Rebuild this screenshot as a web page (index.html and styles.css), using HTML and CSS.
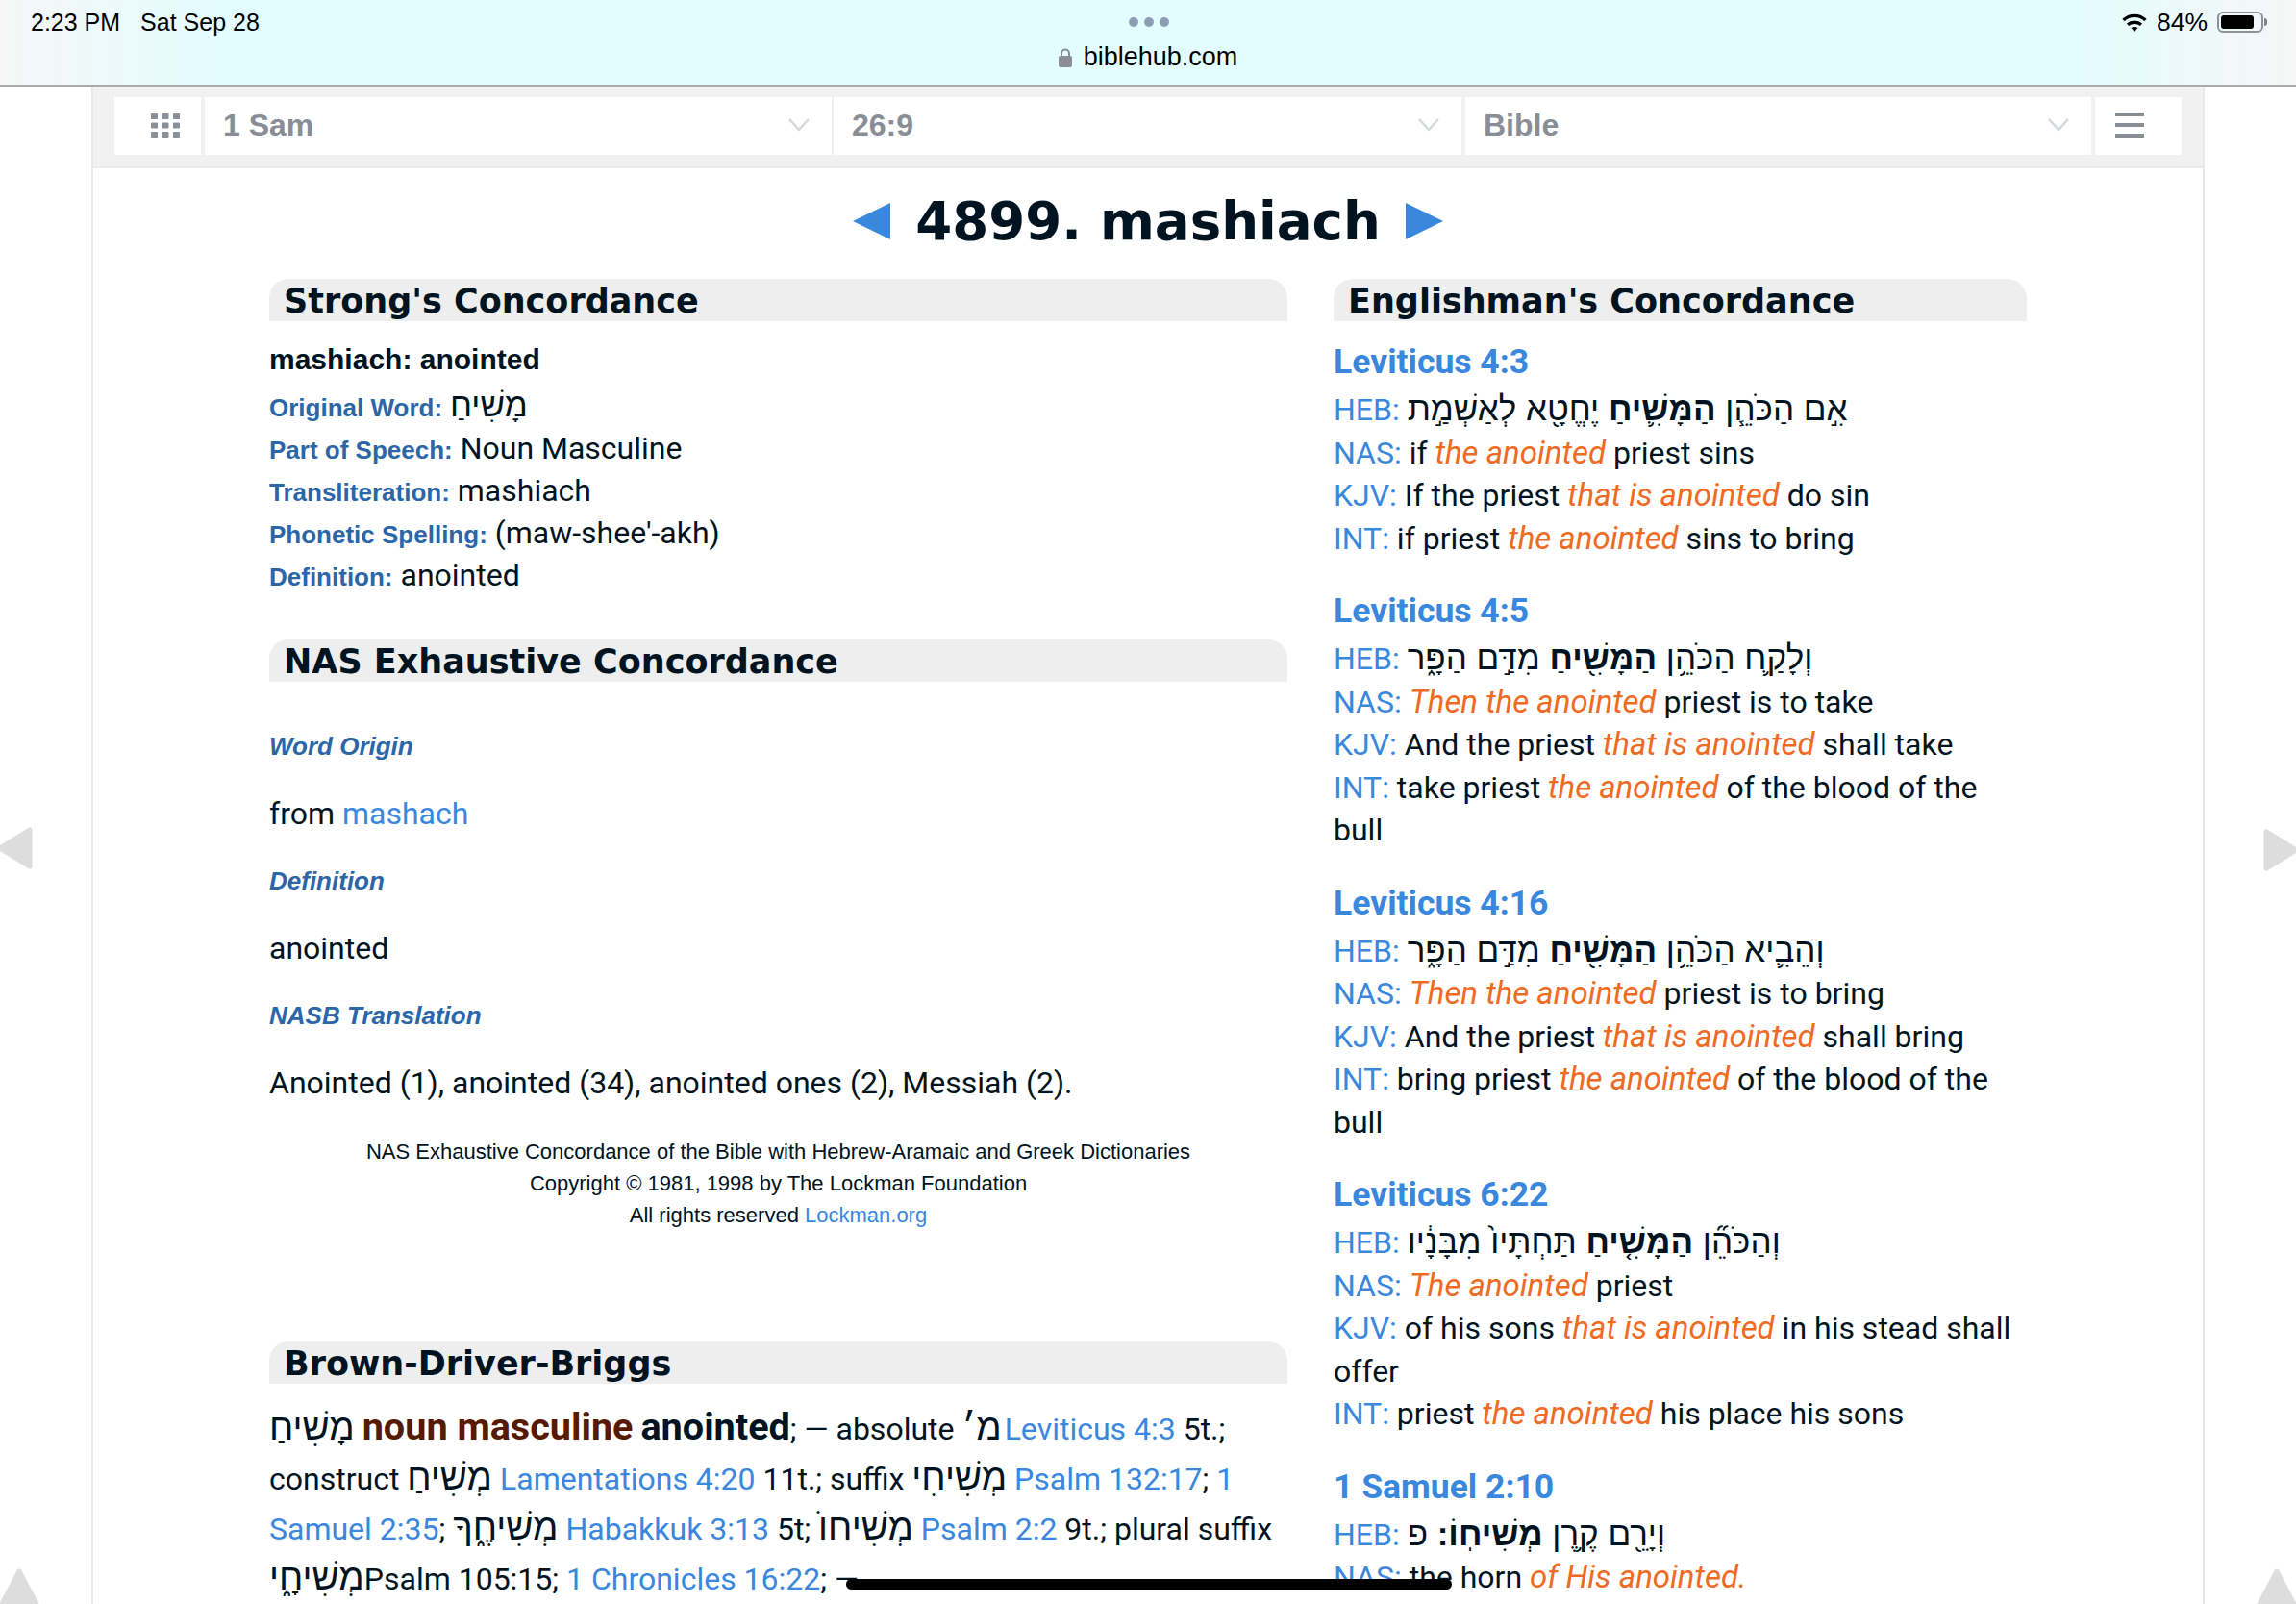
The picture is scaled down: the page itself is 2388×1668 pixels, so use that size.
FILE: index.html
```html
<!doctype html>
<html lang="en">
  <head>
    <title>4899. mashiach</title>
    <meta charset="utf-8"/>
    <link rel="stylesheet" href="styles.css">
  </head>
  <body>
    <!-- ipad status bar and address -->
    <div class="status">
      <div class="status-row">
        <div class="clock"><span>2:23 PM</span><span>Sat Sep 28</span></div>
        <div class="dots"><i></i><i></i><i></i></div>
        <div class="power">
          <svg class="wifi" width="26" height="19" viewBox="0 0 26 19"><path d="M1.500 7C8 .8 18 .8 24.500 7" fill="none" stroke="#000" stroke-width="3.400"/><path d="M6 11.800C10 8.300 16 8.300 20 11.800" fill="none" stroke="#000" stroke-width="3.400"/><path d="M9.500 15C11.500 13.600 14.500 13.600 16.500 15L13 19z" fill="#000"/></svg>
          <span class="percent">84%</span>
          <span class="battery"><b></b></span><span class="battery-tip"></span>
        </div>
      </div>
      <div class="address">
        <svg width="14" height="20" viewBox="0 0 14 20"><path d="M3 9V5.500a4 4 0 0 1 8 0V9" fill="none" stroke="#8a8d94" stroke-width="2"/><rect x="0" y="8" width="14" height="12" rx="2" fill="#8a8d94"/></svg>
        <span>biblehub.com</span>
      </div>
    </div>

    <div class="page">
      <!-- top nav -->
      <div class="nav">
        <div class="nav-box nav-icon nav-grid">
          <svg width="30" height="25" viewBox="0 0 30 25" fill="#8a8f99"><rect x="0" y="0" width="7" height="6" rx="1"/><rect x="11.500" y="0" width="7" height="6" rx="1"/><rect x="23" y="0" width="7" height="6" rx="1"/><rect x="0" y="9.500" width="7" height="6" rx="1"/><rect x="11.500" y="9.500" width="7" height="6" rx="1"/><rect x="23" y="9.500" width="7" height="6" rx="1"/><rect x="0" y="19" width="7" height="6" rx="1"/><rect x="11.500" y="19" width="7" height="6" rx="1"/><rect x="23" y="19" width="7" height="6" rx="1"/></svg>
        </div>
        <div class="nav-box nav-book"><span>1 Sam</span><svg class="chev" width="22" height="14" viewBox="0 0 22 14"><path d="M1 1l10 11L21 1" fill="none" stroke="#d5d8dc" stroke-width="2.500"/></svg></div>
        <div class="nav-box nav-verse"><span>26:9</span><svg class="chev" width="22" height="14" viewBox="0 0 22 14"><path d="M1 1l10 11L21 1" fill="none" stroke="#d5d8dc" stroke-width="2.500"/></svg></div>
        <div class="nav-box nav-bible"><span>Bible</span><svg class="chev" width="22" height="14" viewBox="0 0 22 14"><path d="M1 1l10 11L21 1" fill="none" stroke="#d5d8dc" stroke-width="2.500"/></svg></div>
        <div class="nav-box nav-icon nav-menu"><i></i><i></i><i></i></div>
      </div>

      <div class="main">
        <h1 class="title">
          <span class="tri tri-left"></span>
          <span>4899. mashiach</span>
          <span class="tri tri-right"></span>
        </h1>

        <div class="columns">
          <div class="col-left">
            <h2 class="sec-head">Strong's Concordance</h2>
            <div class="strongs">
              <p class="strongs-top">mashiach: anointed</p>
              <p><span class="lbl">Original Word:</span> <span class="heb" dir="rtl">מָשִׁיחַ</span></p>
              <p><span class="lbl">Part of Speech:</span> Noun Masculine</p>
              <p><span class="lbl">Transliteration:</span> mashiach</p>
              <p><span class="lbl">Phonetic Spelling:</span> (maw-shee'-akh)</p>
              <p><span class="lbl">Definition:</span> anointed</p>
            </div>

            <h2 class="sec-head">NAS Exhaustive Concordance</h2>
            <div class="nas">
              <p class="nas-lbl">Word Origin</p>
              <p>from <a href="#">mashach</a></p>
              <p class="nas-lbl">Definition</p>
              <p>anointed</p>
              <p class="nas-lbl">NASB Translation</p>
              <p>Anointed (1), anointed (34), anointed ones (2), Messiah (2).</p>
            </div>
            <div class="copy">
              NAS Exhaustive Concordance of the Bible with Hebrew-Aramaic and Greek Dictionaries<br>
              Copyright © 1981, 1998 by The Lockman Foundation<br>
              All rights reserved <a href="#">Lockman.org</a>
            </div>

            <h2 class="sec-head">Brown-Driver-Briggs</h2>
            <div class="bdb">
              <span class="heb">מָשִׁיחַ</span> <b class="brown">noun masculine</b> <b class="big">anointed</b>; — absolute <span class="heb abbr">מ׳</span> <a href="#">Leviticus 4:3</a> 5t.;
              construct <span class="heb">מְשִׁיחַ</span> <a href="#">Lamentations 4:20</a> 11t.; suffix <span class="heb">מְשִׁיחִי</span> <a href="#">Psalm 132:17</a>; <a href="#">1 Samuel 2:35</a>; <span class="heb">מְשִׁיחֶ֑ךָ</span> <a href="#">Habakkuk 3:13</a> 5t; <span class="heb">מְשִׁיחוֺ</span> <a href="#">Psalm 2:2</a> 9t.; plural suffix
              <span class="heb">מְשִׁיחָ֑י</span>Psalm 105:15; <a href="#">1 Chronicles 16:22</a>; —
            </div>
          </div>

          <div class="col-right">
            <h2 class="sec-head">Englishman's Concordance</h2>

            <div class="verse">
              <a class="ref" href="#">Leviticus 4:3</a>
              <p><span class="tag">HEB:</span> <span class="heb" dir="rtl">אִ֣ם הַכֹּהֵ֧ן <b>הַמָּשִׁ֛יחַ</b> יֶחֱטָ֖א לְאַשְׁמַ֣ת</span></p>
              <p><span class="tag">NAS:</span> if <em>the anointed</em> priest sins</p>
              <p><span class="tag">KJV:</span> If the priest <em>that is anointed</em> do sin</p>
              <p><span class="tag">INT:</span> if priest <em>the anointed</em> sins to bring</p>
            </div>

            <div class="verse">
              <a class="ref" href="#">Leviticus 4:5</a>
              <p><span class="tag">HEB:</span> <span class="heb" dir="rtl">וְלָקַ֛ח הַכֹּהֵ֥ן <b>הַמָּשִׁ֖יחַ</b> מִדַּ֣ם הַפָּ֑ר</span></p>
              <p><span class="tag">NAS:</span> <em>Then the anointed</em> priest is to take</p>
              <p><span class="tag">KJV:</span> And the priest <em>that is anointed</em> shall take</p>
              <p><span class="tag">INT:</span> take priest <em>the anointed</em> of the blood of the bull</p>
            </div>

            <div class="verse">
              <a class="ref" href="#">Leviticus 4:16</a>
              <p><span class="tag">HEB:</span> <span class="heb" dir="rtl">וְהֵבִ֛יא הַכֹּהֵ֥ן <b>הַמָּשִׁ֖יחַ</b> מִדַּ֣ם הַפָּ֑ר</span></p>
              <p><span class="tag">NAS:</span> <em>Then the anointed</em> priest is to bring</p>
              <p><span class="tag">KJV:</span> And the priest <em>that is anointed</em> shall bring</p>
              <p><span class="tag">INT:</span> bring priest <em>the anointed</em> of the blood of the bull</p>
            </div>

            <div class="verse">
              <a class="ref" href="#">Leviticus 6:22</a>
              <p><span class="tag">HEB:</span> <span class="heb" dir="rtl">וְהַכֹּהֵ֞ן <b>הַמָּשִׁ֤יחַ</b> תַּחְתָּיו֙ מִבָּנָ֔יו</span></p>
              <p><span class="tag">NAS:</span> <em>The anointed</em> priest</p>
              <p><span class="tag">KJV:</span> of his sons <em>that is anointed</em> in his stead shall offer</p>
              <p><span class="tag">INT:</span> priest <em>the anointed</em> his place his sons</p>
            </div>

            <div class="verse">
              <a class="ref" href="#">1 Samuel 2:10</a>
              <p><span class="tag">HEB:</span> <span class="heb" dir="rtl">וְיָרֵ֖ם קֶ֥רֶן <b>מְשִׁיחֽוֹ:</b> פ</span></p>
              <p><span class="tag">NAS:</span> the horn <em>of His anointed.</em></p>
            </div>
          </div>
        </div>
      </div>
    </div>

    <!-- page arrows that float over the sides -->
    <svg class="side side-left" width="40" height="48" viewBox="0 0 40 48"><path d="M3 24L34 5V43z"/></svg>
    <svg class="side side-right" width="40" height="48" viewBox="0 0 40 48"><path d="M37 24L6 5V43z"/></svg>
    <svg class="side side-up-left" width="44" height="40" viewBox="0 0 44 40"><path d="M22 4L40 38H4z"/></svg>
    <svg class="side side-up-right" width="44" height="40" viewBox="0 0 44 40"><path d="M22 4L40 38H4z"/></svg>
    <div class="home-bar"></div>
  </body>
</html>
```

FILE: styles.css
```css
/* page */
html, body{
  margin: 0;
  height: 1668px;
  overflow: hidden;
}
body{
  position: relative;
  background-color: #fff;
  color: #001320;
  font-family: Roboto, "Liberation Sans", sans-serif;
  font-size: 32px;
}
a{
  color: #3a87de;
  text-decoration: none;
}
p{
  margin: 0;
}

/* status bar */
.status{
  height: 90px;
  box-sizing: border-box;
  border-bottom: 2px solid #a9acae;
  background: linear-gradient(90deg, #f6f6f6 0, #e3fdff 10%, #e3fdff 90%, #f6f6f6 100%);
  font-family: "Liberation Sans", sans-serif;
  color: #000;
}
.status-row{
  height: 46px;
  padding: 0 30px 0 32px;
  display: grid;
  grid-template-columns: 1fr auto 1fr;
  align-items: center;
  font-size: 25px;
}
.clock{
  display: flex;
  gap: 21px;
}
.dots{
  display: flex;
  gap: 6px;
}
.dots i{
  width: 10px;
  height: 10px;
  border-radius: 50%;
  background-color: #8b9eb5;
}
.power{
  display: flex;
  align-items: center;
  justify-content: flex-end;
  gap: 10px;
}
.percent{
  font-size: 26.500px;
}
.battery{
  width: 48px;
  height: 22px;
  box-sizing: border-box;
  border: 2px solid #8d9396;
  border-radius: 6px;
  padding: 2px;
  display: flex;
}
.battery b{
  width: 34px;
  background-color: #000;
  border-radius: 3px;
}
.battery-tip{
  width: 3px;
  height: 8px;
  margin-left: -9px;
  background-color: #7d8386;
  border-radius: 0 3px 3px 0;
}
.address{
  margin-top: -2px;
  display: flex;
  justify-content: center;
  align-items: center;
  gap: 12px;
  font-size: 27px;
}

/* nav */
.page{
  width: 2198px;
  margin: 0 auto 0 95px;
  box-sizing: border-box;
  border-left: 2px solid #e8e8e8;
  border-right: 2px solid #e8e8e8;
  height: 1578px;
}
.nav{
  height: 85px;
  box-sizing: border-box;
  padding: 11px 22px 0 22px;
  background-color: #f1f1f1;
  border-bottom: 2px solid #eaeaea;
  display: flex;
  gap: 4px;
}
.nav-box{
  height: 60px;
  padding-bottom: 2px;
  background-color: #fff;
  display: flex;
  align-items: center;
  color: #888d96;
  font-family: "Liberation Sans", sans-serif;
  font-size: 32px;
  font-weight: 700;
  box-sizing: border-box;
}
.nav-icon{
  width: 90px;
  flex: none;
  justify-content: center;
}
.nav-grid{ padding-left: 16px; }
.nav-book{ width: 652px; }
.nav-verse{ width: 653px; margin-left: -2px; }
.nav-bible{ width: 651px; }
.nav-book, .nav-verse, .nav-bible{
  justify-content: space-between;
  padding: 0 23px 2px 19px;
}
.nav-menu{
  flex-direction: column;
  gap: 7px;
  padding-right: 18px;
}
.nav-menu i{
  width: 30px;
  height: 4px;
  background-color: #888d96;
}

/* main */
.main{
  padding: 0 183px;
}
.title{
  margin: 0 0 6px 0;
  height: 109px;
  display: flex;
  justify-content: center;
  align-items: center;
  gap: 26px;
  font-family: "DejaVu Sans", sans-serif;
  font-size: 54.600px;
  font-weight: 700;
}
.tri{
  width: 0;
  height: 0;
  border-top: 19px solid transparent;
  border-bottom: 19px solid transparent;
}
.tri-left{ border-right: 39px solid #3a87de; }
.tri-right{ border-left: 39px solid #3a87de; }

.columns{
  display: flex;
  gap: 48px;
}
.col-left{ width: 1059px; flex: none; }
.col-right{ width: 721px; flex: none; }

.sec-head{
  margin: 0;
  height: 44px;
  padding-left: 15px;
  background-color: #eee;
  border-radius: 20px 20px 0 0;
  font-family: "DejaVu Sans", sans-serif;
  font-size: 35px;
  font-weight: 700;
  line-height: 46px;
  white-space: nowrap;
}

/* strongs */
.strongs{
  padding: 18px 0 0 0;
  height: 331px;
  box-sizing: border-box;
}
.strongs p{
  height: 44px;
  line-height: 44px;
}
.strongs .heb{
  line-height: 0;
}
.strongs-top{
  font-family: "Liberation Sans", sans-serif;
  font-size: 30px;
  font-weight: 700;
  margin-bottom: 4px;
}
.lbl{
  font-family: "Liberation Sans", sans-serif;
  font-size: 26px;
  font-weight: 700;
  color: #2b66a8;
}
.heb{
  font-family: "Liberation Sans", "DejaVu Sans", sans-serif;
  font-size: 35px;
}

/* nas */
.nas{
  padding-top: 32px;
}
.nas p{
  height: 70px;
  line-height: 70px;
}
.nas .nas-lbl{
  font-family: "Liberation Sans", sans-serif;
  font-size: 26px;
  font-weight: 700;
  font-style: italic;
  color: #2b66a8;
}
.copy{
  margin-top: 20px;
  height: 214px;
  text-align: center;
  font-family: "Liberation Sans", sans-serif;
  font-size: 22px;
  line-height: 33px;
}

/* bdb */
.bdb{
  padding-top: 21px;
  line-height: 52px;
  font-size: 32px;
}
.bdb .heb{
  font-size: 38.500px;
  line-height: 0;
}
.bdb .abbr{
  margin-right: -5px;
}
.brown{
  color: #551a00;
  font-size: 39.600px;
  line-height: 0;
}
.big{
  font-size: 39.600px;
  line-height: 0;
}

/* englishmans */
.verse{
  padding-top: 20px;
  margin-bottom: 11px;
  line-height: 44.500px;
}
.ref{
  display: block;
  font-size: 35.500px;
  font-weight: 700;
  line-height: 44px;
  margin-bottom: 5px;
}
.tag{
  color: #3a87de;
}
.verse em{
  color: #ef6a22;
  font-size: 33px;
}

/* floating arrows */
.side{
  position: absolute;
  fill: #ddd;
  stroke: #ddd;
  stroke-width: 5;
  stroke-linejoin: round;
}
.side-left{ left: -3px; top: 858px; }
.side-right{ right: -3px; top: 860px; }
.side-up-left{ left: -2px; top: 1630px; }
.side-up-right{ right: -2px; top: 1630px; }
.home-bar{
  position: absolute;
  left: 880px;
  top: 1642px;
  width: 630px;
  height: 11px;
  border-radius: 6px;
  background-color: #000;
}
```
